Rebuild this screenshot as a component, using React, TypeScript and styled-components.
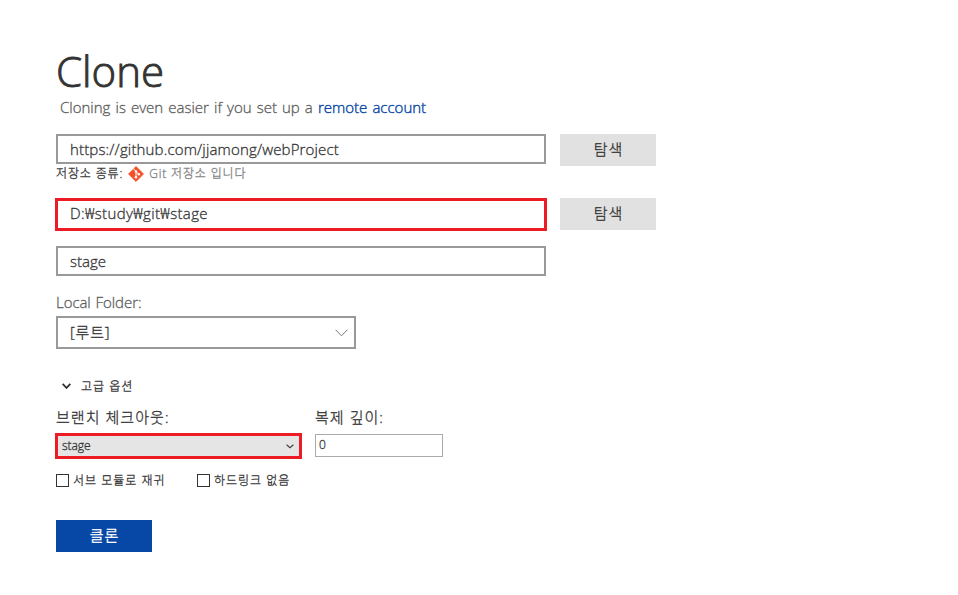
import React from 'react';
import styled, { createGlobalStyle } from 'styled-components';

const GlobalStyle = createGlobalStyle`
  * { box-sizing: border-box; }
  body {
    margin: 0;
    background: #fff;
    color: #333;
    font-family: "Open Sans", "Noto Sans CJK KR", sans-serif;
    font-weight: 300;
    -webkit-text-stroke: 0.3px;
    overflow: hidden;
  }
`;

const Page = styled.main`
  display: flex;
  flex-direction: column;
  align-items: flex-start;
  width: 958px;
  height: 595px;
  padding: 48px 0 0 56px;
  white-space: nowrap;
`;

const Title = styled.h1`
  margin: 0;
  height: 48px;
  line-height: 46px;
  font-size: 42px;
  font-weight: 300;
  -webkit-text-stroke: 0.9px;
`;

const Hint = styled.p`
  margin: 0 0 16px 4px;
  height: 22px;
  line-height: 22px;
  font-size: 15px;
  word-spacing: 1.2px;
  color: #5c5c5c;
`;

const Link = styled.a`
  color: #0747a6;
  -webkit-text-stroke: 0.4px;
`;

const Row = styled.div<{ $height: number }>`
  display: flex;
  align-items: flex-start;
  gap: 14px;
  height: ${p => p.$height}px;
`;

const Field = styled.div<{ $marked?: boolean; $spacing?: number }>`
  width: ${p => (p.$marked ? 492 : 490)}px;
  height: ${p => (p.$marked ? 33 : 30)}px;
  margin: ${p => (p.$marked ? '0 -1px' : '0')};
  padding-left: 12px;
  border: ${p => (p.$marked ? '3px solid #ed1c24' : '2px solid #999')};
  line-height: ${p => (p.$marked ? 24 : 26)}px;
  font-size: 15px;
  letter-spacing: ${p => p.$spacing ?? 0}px;
`;

const Won = styled.span`
  font-family: "Noto Sans", sans-serif;
  -webkit-text-stroke: 0.2px;
`;

const Button = styled.button<{ $primary?: boolean }>`
  flex: none;
  width: 96px;
  height: 32px;
  padding: 0 0 2px 1px;
  border: 0;
  background: ${p => (p.$primary ? '#0747a6' : '#e1e1e1')};
  color: ${p => (p.$primary ? '#fff' : '#333')};
  font: inherit;
  font-size: 15px;
  line-height: 30px;
  letter-spacing: 1px;
  -webkit-text-stroke: ${p => (p.$primary ? 0.4 : 0.3)}px;
`;

const RepoType = styled.div`
  display: flex;
  align-items: center;
  height: 18px;
  margin: -2px 0 16px;
  padding-top: 2px;
  font-size: 12px;
  line-height: 18px;
  letter-spacing: 0.85px;
`;

const RepoName = styled.span`
  margin-left: 5px;
  color: #808080;
`;

const GitIcon = styled.svg`
  width: 16px;
  height: 16px;
  margin: 0 0 1px 5px;
`;

const FolderLabel = styled.label`
  height: 22px;
  margin: 15px 0 3px;
  font-size: 15px;
  line-height: 22px;
  letter-spacing: -0.05px;
  word-spacing: 1px;
  color: #5c5c5c;
`;

const FolderSelect = styled.div`
  display: flex;
  align-items: center;
  justify-content: space-between;
  width: 300px;
  height: 33px;
  padding: 0 6px 0 12px;
  border: 2px solid #999;
  font-size: 15px;
  line-height: 28px;
  letter-spacing: 0.8px;
`;

const FolderValue = styled.span`
  padding-bottom: 2px;
`;

const Advanced = styled.div`
  display: flex;
  align-items: center;
  gap: 10px;
  height: 20px;
  margin: 27px 0 10px 6px;
  font-size: 12px;
  line-height: 20px;
  letter-spacing: 1px;
`;

const SmallText = styled.span`
  padding-top: 2px;
`;

const Options = styled.div`
  display: grid;
  grid-template-columns: 259px 128px;
  grid-template-rows: 28px 26px;
  font-size: 15px;
  line-height: 22px;
`;

const OptionLabel = styled.label`
  letter-spacing: 1.05px;
`;

const BranchSelect = styled.div`
  display: flex;
  align-items: center;
  justify-content: space-between;
  width: 247px;
  height: 26px;
  margin: -1px 0 0 -1px;
  padding: 0 5px 0 4px;
  border: 3px solid #ed1c24;
  background: #e5e5e5;
  font-size: 12px;
  line-height: 18px;
  letter-spacing: -0.05px;
`;

const DepthInput = styled.div`
  height: 23px;
  padding-left: 3px;
  border: 1px solid #ababab;
  font-size: 12px;
  line-height: 20px;
`;

const Checks = styled.div`
  display: grid;
  grid-template-columns: 141px auto;
  height: 20px;
  margin: 10px 0 30px;
`;

const Check = styled.label`
  display: flex;
  align-items: center;
  gap: 4px;
  height: 20px;
  font-size: 12px;
  line-height: 20px;
  letter-spacing: 1px;
`;

const Box = styled.span`
  width: 13px;
  height: 13px;
  margin-top: 1px;
  border: 1px solid #333;
`;

const Chevron = ({ w, h, color, stroke }: { w: number; h: number; color: string; stroke: number }) => (
  <svg width={w} height={h} viewBox={`0 0 ${w} ${h}`} fill="none" stroke={color} strokeWidth={stroke}>
    <path d={`M.6 .8 L${w / 2} ${h - 1.2} L${w - 0.6} .8`} />
  </svg>
);

export default function App() {
  return (
    <Page>
      <GlobalStyle />
      <Title>Clone</Title>
      <Hint>
        Cloning is even easier if you set up a <Link>remote account</Link>
      </Hint>
      <Row $height={32}>
        <Field $spacing={0.16}>https://github.com/jjamong/webProject</Field>
        <Button>탐색</Button>
      </Row>
      <RepoType>
        저장소 종류:
        <GitIcon viewBox="0 0 16 16">
          <path d="M8 .6 15.4 8 8 15.4 .6 8Z" fill="#f4502a" stroke="#f4502a" strokeWidth="1" strokeLinejoin="round" />
          <path d="M5.2 2.6 8 5.3V11.2M8 5.5l2.7 2.7" fill="none" stroke="#fff" strokeWidth="1" />
          <circle cx="8" cy="5.4" r="1.2" fill="#fff" />
          <circle cx="8" cy="11.2" r="1.3" fill="#fff" />
          <circle cx="10.8" cy="8.2" r="1.3" fill="#fff" />
        </GitIcon>
        <RepoName>Git 저장소 입니다</RepoName>
      </RepoType>
      <Row $height={48}>
        <Field $marked $spacing={0.35}>
          D:<Won>₩</Won>study<Won>₩</Won>git<Won>₩</Won>stage
        </Field>
        <Button>탐색</Button>
      </Row>
      <Field>stage</Field>
      <FolderLabel>Local Folder:</FolderLabel>
      <FolderSelect>
        <FolderValue>[루트]</FolderValue>
        <Chevron w={13} h={8} color="#777" stroke={1} />
      </FolderSelect>
      <Advanced>
        <Chevron w={9} h={6} color="#333" stroke={1.9} />
        <SmallText>고급 옵션</SmallText>
      </Advanced>
      <Options>
        <OptionLabel>브랜치 체크아웃:</OptionLabel>
        <OptionLabel>복제 깊이:</OptionLabel>
        <BranchSelect>
          stage
          <Chevron w={8} h={5} color="#444" stroke={1.2} />
        </BranchSelect>
        <DepthInput>0</DepthInput>
      </Options>
      <Checks>
        <Check><Box /><SmallText>서브 모듈로 재귀</SmallText></Check>
        <Check><Box /><SmallText>하드링크 없음</SmallText></Check>
      </Checks>
      <Button $primary>클론</Button>
    </Page>
  );
}
